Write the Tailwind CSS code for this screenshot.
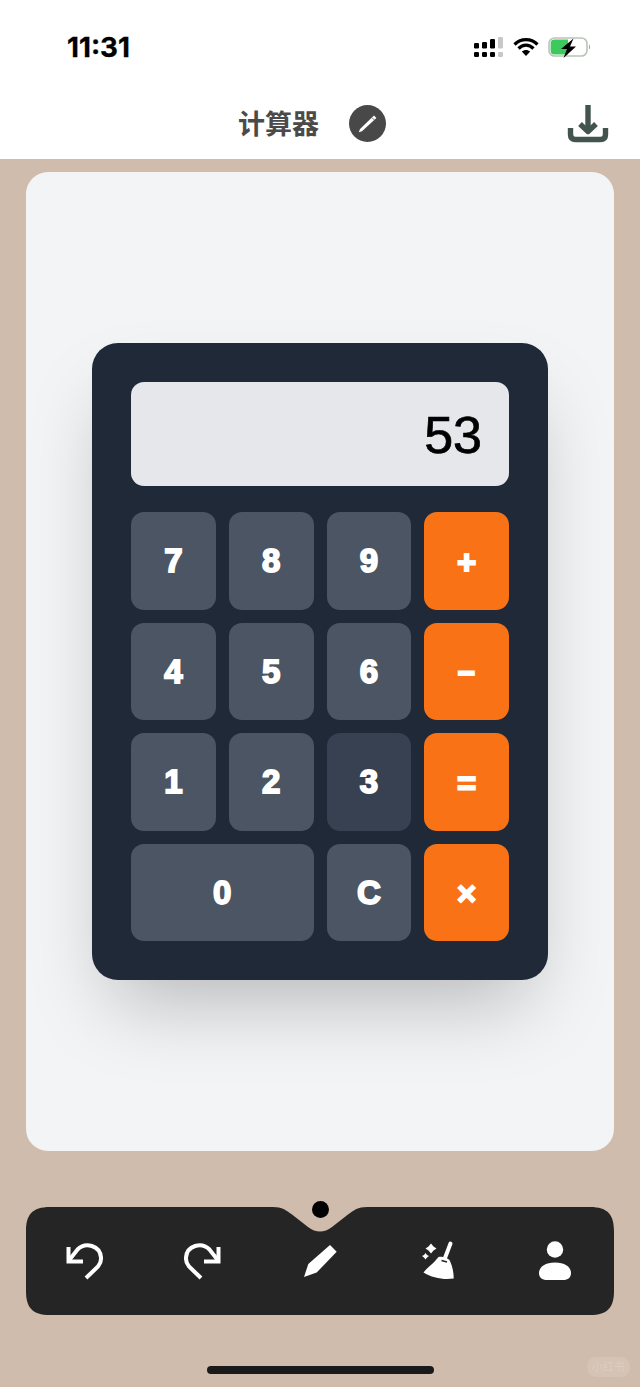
<!DOCTYPE html>
<html lang="zh">
<head>
<meta charset="utf-8">
<title>计算器</title>
<script src="https://cdn.jsdelivr.net/npm/@tailwindcss/browser@4"></script>
</head>
<body class="m-0">
<div class="relative w-[640px] h-[1387px] overflow-hidden bg-[#d0bcac] flex flex-col font-['Inter','Noto_Sans_CJK_SC',sans-serif]">
  <header class="h-[159px] bg-white flex flex-col shrink-0">
    <div class="h-[94px] flex items-center justify-between pl-[67px] pr-[49px]">
      <span class="pt-[2px] text-[27.7px] font-bold leading-none text-black [-webkit-text-stroke:0.3px_black]">11:31</span>
      <div class="flex items-center gap-[9px]">
        <svg width="31" height="24" viewBox="0 0 31 24" class="block">
          <g fill="#000">
            <rect x="1" y="8" width="5" height="5.5" rx="1.2"/><rect x="9" y="7" width="5" height="6.5" rx="1.2"/><rect x="17" y="4" width="5" height="9.5" rx="1.2"/>
            <rect x="1" y="17" width="5" height="5" rx="1.2"/><rect x="9" y="17" width="5" height="5" rx="1.2"/><rect x="17" y="17" width="5" height="5" rx="1.2"/>
          </g>
          <rect x="25" y="2" width="5" height="11.5" rx="1.2" fill="#c8c8c8"/><rect x="25" y="17" width="5" height="5" rx="1.2" fill="#c8c8c8"/>
        </svg>
        <svg width="26" height="20" viewBox="0 0 26 20" class="block">
          <path d="M1.5 7.5C8 1 18 1 24.5 7.5M5.5 11.5C10 7 16 7 20.5 11.5" fill="none" stroke="#000" stroke-width="3.2"/>
          <path d="M8.8 14.6C11.2 12.4 14.8 12.4 17.2 14.6L13 19Z" fill="#000"/>
        </svg>
        <svg width="43" height="22" viewBox="0 0 43 22" class="block">
          <rect x="1" y="2" width="38" height="18" rx="5.5" fill="#fff" stroke="#b9c4b9" stroke-width="1.6"/>
          <path d="M6.5 3.6H20V18.4H6.5Q2.6 18.4 2.6 14.5V7.5Q2.6 3.6 6.5 3.6Z" fill="#3ec95f"/>
          <path d="M41 8.5C42.5 9.3 42.5 12.7 41 13.5Z" fill="#a8a8a8"/>
          <path d="M25.5 2.5L13 13H19L15.5 22L28 10.5H22Z" fill="#000"/>
        </svg>
      </div>
    </div>
    <div class="flex items-start pl-[238px] pr-[30px]">
      <span class="text-[27px] font-bold leading-[36px] pt-[13px] text-[#4a4a4a]">计算器</span>
      <div class="ml-[30px] mt-[11px] w-[37px] h-[37px] rounded-full bg-[#484848] flex items-center justify-center">
        <svg width="37" height="37" viewBox="0 0 37 37" class="block">
          <path d="M9.8 27.2L11 24L25 10.6L27.4 13L13 26.2Z" fill="#fff"/>
          <path d="M23 12.6L25.3 14.9" stroke="#484848" stroke-width="0.8"/>
        </svg>
      </div>
      <svg width="44" height="44" viewBox="0 0 44 44" class="block ml-auto mt-[7px]">
        <g fill="none" stroke="#42544e" stroke-width="5.4">
          <path d="M22 4V29"/>
          <path d="M14 23L22 30.5L30 23" stroke-linejoin="round"/>
          <path d="M4.5 27V33.5Q4.5 38.5 9.5 38.5H34.5Q39.5 38.5 39.5 33.5V27"/>
        </g>
      </svg>
    </div>
  </header>

  <main class="mx-[26px] mt-[13px] h-[979px] shrink-0 rounded-[22px] bg-[#f3f4f6] flex items-center justify-center">
    <div class="w-[456px] p-[39px] rounded-[26px] bg-[#1f2937] shadow-[0_40px_80px_-20px_rgba(0,0,0,0.25)]">
      <div class="h-[104px] mb-[26px] pt-[2px] rounded-[13px] bg-[#e5e7eb] flex items-center justify-end pr-[27px] font-['Liberation_Sans',sans-serif] text-[52px] leading-none text-black [-webkit-text-stroke:0.7px_black]">53</div>
      <div class="grid grid-cols-4 auto-rows-[97.5px] gap-[13px] font-['Liberation_Sans',sans-serif] text-[33px] font-bold leading-none text-white [-webkit-text-stroke:1.8px_white]">
        <button class="rounded-[13px] bg-[#4b5563]">7</button>
        <button class="rounded-[13px] bg-[#4b5563]">8</button>
        <button class="rounded-[13px] bg-[#4b5563]">9</button>
        <button class="rounded-[13px] bg-[#f97316] pt-[3px]">+</button>
        <button class="rounded-[13px] bg-[#4b5563]">4</button>
        <button class="rounded-[13px] bg-[#4b5563]">5</button>
        <button class="rounded-[13px] bg-[#4b5563]">6</button>
        <button class="rounded-[13px] bg-[#f97316] pt-[3px] text-[30px] [-webkit-text-stroke:2px_white]">−</button>
        <button class="rounded-[13px] bg-[#4b5563]">1</button>
        <button class="rounded-[13px] bg-[#4b5563]">2</button>
        <button class="rounded-[13px] bg-[#374151]">3</button>
        <button class="rounded-[13px] bg-[#f97316] pt-[3px]">=</button>
        <button class="col-span-2 rounded-[13px] bg-[#4b5563]">0</button>
        <button class="rounded-[13px] bg-[#4b5563]">C</button>
        <button class="rounded-[13px] bg-[#f97316] pt-[3px]">×</button>
      </div>
    </div>
  </main>

  <nav class="relative mx-[26px] mt-[56px] h-[108px] shrink-0 grid grid-cols-5 items-center justify-items-center">
    <svg width="588" height="108" viewBox="0 0 588 108" class="absolute inset-0 block">
      <path d="M24 0H247C256 0 260 3 266 7.5L282 20C290 26 298 26 306 20L322 7.5C328 3 332 0 341 0H564C582 0 588 8 588 24V84C588 100 582 108 564 108H24C6 108 0 100 0 84V24C0 8 6 0 24 0Z" fill="#252525"/>
    </svg>
    <span class="absolute left-[285.5px] top-[-6.5px] w-[17px] h-[17px] rounded-full bg-black"></span>
    <svg width="44" height="44" viewBox="0 0 44 44" class="relative block">
      <g fill="none" stroke="#fff" stroke-width="4">
        <path d="M5.5 8V22.5H20"/>
        <path d="M5.5 22L14.5 10.5C22.5 2.5 37 6.5 38 18.5C38.4 22.5 37 25 35 27.5L23 39"/>
      </g>
    </svg>
    <svg width="44" height="44" viewBox="0 0 44 44" class="relative block -scale-x-100">
      <g fill="none" stroke="#fff" stroke-width="4">
        <path d="M5.5 8V22.5H20"/>
        <path d="M5.5 22L14.5 10.5C22.5 2.5 37 6.5 38 18.5C38.4 22.5 37 25 35 27.5L23 39"/>
      </g>
    </svg>
    <svg width="44" height="44" viewBox="0 0 44 44" class="relative block">
      <path d="M6 38L10.3 25L32 6L38.7 12.7L18.7 33.5Z" fill="#fff"/>
    </svg>
    <svg width="44" height="44" viewBox="0 0 44 44" class="relative block">
      <path d="M34.5 4.5L29 19" fill="none" stroke="#fff" stroke-width="4" stroke-linecap="round"/>
      <path d="M22.5 18C26 17 31 18.5 33.5 21C36 26 37.8 33 37.7 39.5C28 41 16 39 7.5 33.5C11 29 18 24 22.5 18Z" fill="#fff"/>
      <path d="M25.5 21.5L31 23" stroke="#252525" stroke-width="1.4"/>
      <path d="M15 4.5L17.5 7.5L20.5 9.5L17.5 11.5L15 14.5L12.5 11.5L9.5 9.5L12.5 7.5Z" fill="#fff"/>
      <path d="M9.5 14L11 16L13 17L11 18.5L9.5 20.5L8 18.5L6 17L8 16Z" fill="#fff"/>
    </svg>
    <svg width="44" height="44" viewBox="0 0 44 44" class="relative block">
      <circle cx="22" cy="10.5" r="8.2" fill="#fff"/>
      <path d="M22 23.5C32 23.5 38 28 38 34C38 38.5 35 41 30 41H14C9 41 6 38.5 6 34C6 28 12 23.5 22 23.5Z" fill="#fff"/>
    </svg>
  </nav>

  <div class="mx-auto mt-[51px] w-[227px] h-[8px] rounded-full bg-[#1a1a1a] shrink-0"></div>

  <div class="absolute left-[587px] top-[1357px] w-[43px] h-[20px] rounded-[9px] bg-white/10 flex items-center justify-center text-[11px] leading-none text-white/20">小红书</div>
</div>
</body>
</html>
